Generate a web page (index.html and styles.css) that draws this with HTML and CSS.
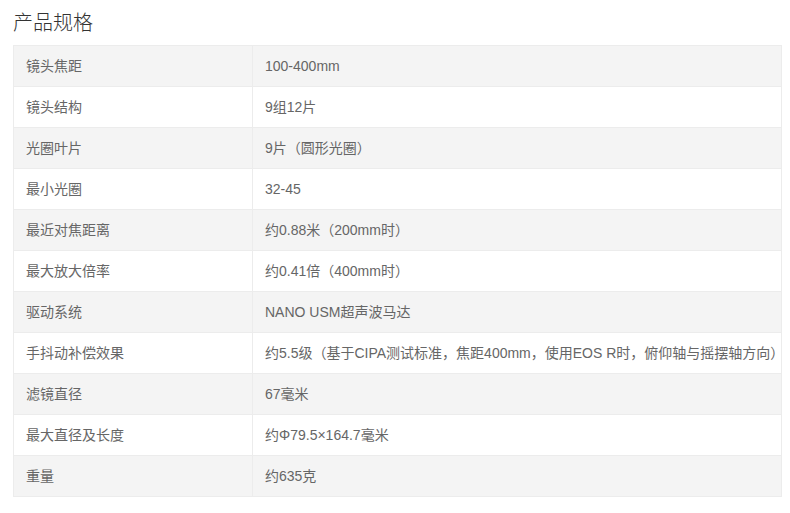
FILE: index.html
```html
<!DOCTYPE html>
<html lang="zh-CN">
<head>
<meta charset="utf-8">
<title>产品规格</title>
<link rel="stylesheet" href="styles.css">
</head>
<body>
<div class="spec">
  <h2 class="spec-title">产品规格</h2>
  <table class="spec-table">
    <tbody>
      <tr><td class="k">镜头焦距</td><td class="v">100-400mm</td></tr>
      <tr><td class="k">镜头结构</td><td class="v">9组12片</td></tr>
      <tr><td class="k">光圈叶片</td><td class="v">9片（圆形光圈）</td></tr>
      <tr><td class="k">最小光圈</td><td class="v">32-45</td></tr>
      <tr><td class="k">最近对焦距离</td><td class="v">约0.88米（200mm时）</td></tr>
      <tr><td class="k">最大放大倍率</td><td class="v">约0.41倍（400mm时）</td></tr>
      <tr><td class="k">驱动系统</td><td class="v">NANO USM超声波马达</td></tr>
      <tr><td class="k">手抖动补偿效果</td><td class="v">约5.5级（基于CIPA测试标准，焦距400mm，使用EOS R时，俯仰轴与摇摆轴方向）</td></tr>
      <tr><td class="k">滤镜直径</td><td class="v">67毫米</td></tr>
      <tr><td class="k">最大直径及长度</td><td class="v">约Φ79.5×164.7毫米</td></tr>
      <tr><td class="k">重量</td><td class="v">约635克</td></tr>
    </tbody>
  </table>
</div>
</body>
</html>
```
FILE: styles.css
```css
html, body {
  margin: 0;
  padding: 0;
  background: #fff;
}
body {
  font-family: "Liberation Sans", Arial, "Noto Sans CJK SC", sans-serif;
  color: #666;
}
.spec {
  padding: 9px 8px 0 13px;
  width: 769px;
}
.spec-title {
  margin: 0 0 8px 0;
  font-size: 20px;
  line-height: 28px;
  font-weight: 300;
  color: #333;
}
.spec-table {
  width: 769px;
  border-collapse: collapse;
  table-layout: fixed;
  font-size: 14px;
}
.spec-table tr:nth-child(odd) {
  background: #f4f4f4;
}
.spec-table td {
  height: 41px;
  padding: 0 0 0 12px;
  border: 1px solid #ececec;
  box-sizing: border-box;
  vertical-align: middle;
  white-space: nowrap;
  line-height: 20px;
}
.spec-table td.k {
  width: 239px;
}
```
